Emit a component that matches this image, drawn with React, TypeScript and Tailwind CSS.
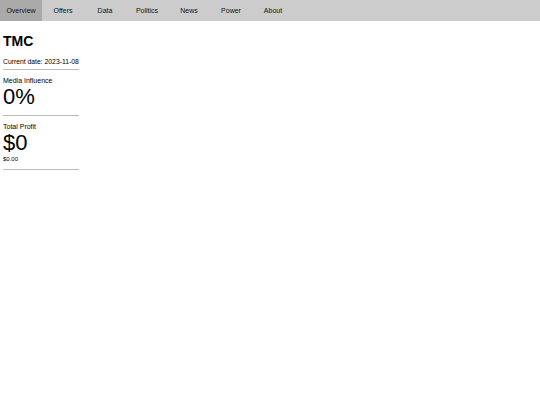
const tabs = ['Overview', 'Offers', 'Data', 'Politics', 'News', 'Power', 'About'];

export default function App() {
  return (
    <div className="min-h-screen bg-white text-black" style={{ fontFamily: '"Liberation Sans", Arial, sans-serif' }}>
      <nav className="flex h-[21px] bg-[#cccccc]">
        {tabs.map((t, i) => (
          <div
            key={t}
            className={`flex w-[42px] items-center justify-center pt-px text-[7px] text-[#111] ${i === 0 ? 'bg-[#aaaaaa]' : ''}`}
          >
            {t}
          </div>
        ))}
      </nav>
      <div className="ml-[3px] w-fit">
        <h1 className="mt-[12px] text-[14px] font-bold leading-[16px]">TMC</h1>
        <p className="mt-[9px] whitespace-nowrap text-[6.8px] leading-[8px]">Current date: 2023-11-08</p>
        <hr className="mt-[3px] border-t border-[#bbbbbb]" />
        <p className="mt-[7px] text-[7px] leading-[8px]">Media Influence</p>
        <p className="text-[22px] leading-[24px]">0%</p>
        <hr className="mt-[6px] border-t border-[#bbbbbb]" />
        <p className="mt-[7px] text-[7px] leading-[8px]">Total Profit</p>
        <p className="text-[22px] leading-[24px]">$0</p>
        <p className="text-[6px] leading-[8px]">$0.00</p>
        <hr className="mt-[6px] border-t border-[#bbbbbb]" />
      </div>
    </div>
  );
}
